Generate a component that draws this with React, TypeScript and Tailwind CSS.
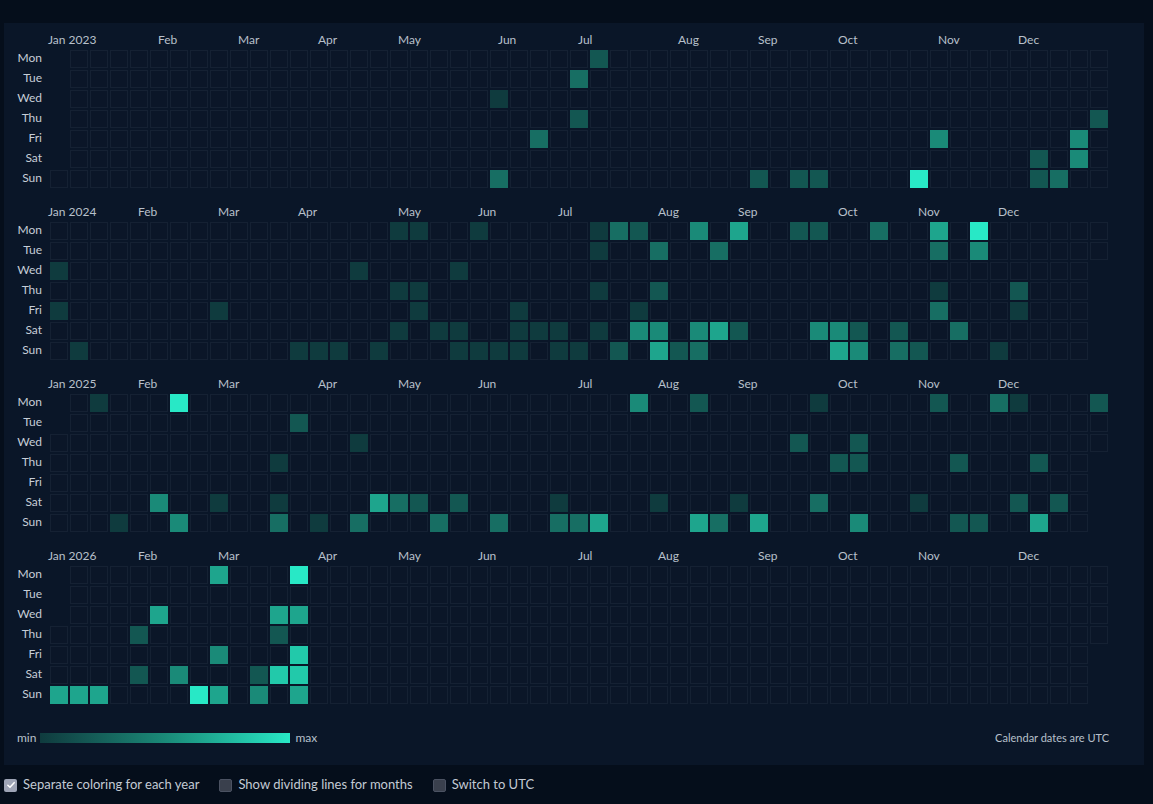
import React from 'react';

type Cell = [number, number];

// per year: rows Mon..Sun, each a list of [week column, level]
const activity: Record<number, Cell[][]> = {
  2023: [
    [[27, 2]],
    [[26, 3]],
    [[22, 1]],
    [[26, 2], [52, 2]],
    [[24, 3], [44, 4], [51, 4]],
    [[49, 2], [51, 4]],
    [[22, 3], [35, 2], [37, 2], [38, 2], [43, 7], [49, 2], [50, 3]],
  ],
  2024: [
    [[17, 1], [18, 1], [21, 1], [27, 1], [28, 3], [29, 2], [32, 4], [34, 5], [37, 2], [38, 2], [41, 3], [44, 5], [46, 7]],
    [[27, 1], [30, 3], [33, 3], [44, 3], [46, 4]],
    [[0, 1], [15, 1], [20, 1]],
    [[17, 1], [18, 1], [27, 1], [30, 2], [44, 1], [48, 2]],
    [[0, 1], [8, 1], [18, 1], [23, 1], [29, 1], [44, 3], [48, 1]],
    [[17, 1], [19, 1], [20, 1], [23, 1], [24, 1], [25, 1], [27, 1], [29, 4], [30, 4], [32, 4], [33, 5], [34, 2], [38, 4], [39, 4], [40, 2], [42, 2], [45, 3]],
    [[1, 1], [12, 1], [13, 1], [14, 1], [16, 1], [20, 1], [21, 1], [22, 1], [23, 1], [25, 1], [26, 1], [28, 2], [30, 5], [31, 2], [32, 3], [39, 5], [40, 4], [42, 3], [43, 2], [47, 1]],
  ],
  2025: [
    [[2, 1], [6, 7], [29, 4], [32, 2], [38, 1], [44, 2], [47, 3], [48, 1], [52, 2]],
    [[12, 2]],
    [[15, 1], [37, 2], [40, 2]],
    [[11, 1], [39, 2], [40, 2], [45, 2], [49, 2]],
    [],
    [[5, 4], [8, 1], [11, 1], [16, 5], [17, 3], [18, 2], [20, 2], [25, 1], [30, 1], [34, 1], [38, 3], [43, 1], [48, 2], [50, 2]],
    [[3, 1], [6, 4], [11, 3], [13, 1], [15, 3], [19, 3], [22, 3], [25, 3], [26, 3], [27, 5], [32, 5], [33, 3], [35, 5], [40, 4], [45, 2], [46, 2], [49, 5]],
  ],
  2026: [
    [[8, 5], [12, 7]],
    [],
    [[5, 5], [11, 5], [12, 5]],
    [[4, 2], [11, 2]],
    [[8, 4], [12, 6]],
    [[4, 2], [6, 4], [10, 2], [11, 6], [12, 6]],
    [[0, 5], [1, 5], [2, 5], [7, 7], [8, 5], [10, 4], [12, 5]],
  ],
};

const levelClass = [
  'bg-[#0b1628] border-[#152133]',
  'bg-[#0f3b3e] border-[#0f3b3e]',
  'bg-[#135752] border-[#135752]',
  'bg-[#176e63] border-[#176e63]',
  'bg-[#1a8a78] border-[#1a8a78]',
  'bg-[#1ea58d] border-[#1ea58d]',
  'bg-[#22c9aa] border-[#22c9aa]',
  'bg-[#28e8c6] border-[#28e8c6]',
];

const days = ['Mon', 'Tue', 'Wed', 'Thu', 'Fri', 'Sat', 'Sun'];
const months = ['Jan', 'Feb', 'Mar', 'Apr', 'May', 'Jun', 'Jul', 'Aug', 'Sep', 'Oct', 'Nov', 'Dec'];

const dayOfYear = (d: Date) => Math.round((d.getTime() - Date.UTC(d.getUTCFullYear(), 0, 1)) / 86400000);

const YearBlock = ({ year }: { year: number }) => {
  const offset = (new Date(Date.UTC(year, 0, 1)).getUTCDay() + 6) % 7;
  const length = dayOfYear(new Date(Date.UTC(year, 11, 31))) + 1;
  const levels: Record<string, number> = {};
  activity[year].forEach((row, r) => row.forEach(([c, l]) => (levels[`${c}-${r}`] = l)));

  const labels = months.map((name, m) => {
    if (m === 0) return { name: `Jan ${year}`, col: 0 };
    const prev = dayOfYear(new Date(Date.UTC(year, m, 0)));
    return { name, col: Math.floor((prev + offset) / 7) };
  });

  const cells = [];
  for (let c = 0; c < 53; c++) {
    for (let r = 0; r < 7; r++) {
      const doy = c * 7 + r - offset;
      if (doy < 0 || doy >= length) {
        cells.push(<div key={`${c}-${r}`} />);
      } else {
        const level = levels[`${c}-${r}`] ?? 0;
        cells.push(<div key={`${c}-${r}`} className={`border ${levelClass[level]}`} />);
      }
    }
  }

  return (
    <div className="flex flex-col">
      <div className="flex h-[18px]">
        <div className="w-[46px] shrink-0" />
        <div className="grid grid-cols-[repeat(53,18px)] gap-x-[2px] text-[12px] leading-[16px] text-[#b8c0cb]">
          {labels.map((l, i) => (
            <span
              key={l.name}
              className={`whitespace-nowrap ${i === 0 ? '-ml-0.5' : 'ml-2'}`}
              style={{ gridColumnStart: l.col + 1, gridRowStart: 1 }}
            >
              {l.name}
            </span>
          ))}
        </div>
      </div>
      <div className="flex">
        <div className="grid w-[38px] shrink-0 grid-rows-[repeat(7,18px)] gap-y-[2px] text-right text-[12px] leading-[16px] text-[#c6cdd7]">
          {days.map((d) => (
            <span key={d}>{d}</span>
          ))}
        </div>
        <div className="ml-[8px] grid grid-flow-col grid-cols-[repeat(53,18px)] grid-rows-[repeat(7,18px)] gap-[2px]">
          {cells}
        </div>
      </div>
    </div>
  );
};

const Checkbox = ({ checked, label }: { checked?: boolean; label: string }) => (
  <label className="flex items-center gap-[6px]">
    {checked ? (
      <span className="flex h-[13px] w-[13px] items-center justify-center rounded-[2px] bg-[#9ea4b6]">
        <svg viewBox="0 0 12 12" className="h-[10px] w-[10px]">
          <path d="M2.2 6.3 L4.8 8.8 L9.8 3.2" fill="none" stroke="#ffffff" strokeWidth="1.8" strokeLinecap="round" strokeLinejoin="round" />
        </svg>
      </span>
    ) : (
      <span className="h-[13px] w-[13px] rounded-[2px] border border-[#4b5262] bg-[#3a404d]" />
    )}
    <span>{label}</span>
  </label>
);

export default function App() {
  return (
    <div className="min-h-[804px] bg-[#050e1b] px-[4px] pt-[23px] font-['Lato','Liberation_Sans',sans-serif]">
      <div className="w-[1140px] bg-[#0a1628] pt-[9px] pb-[18px]">
        <div className="flex flex-col gap-4">
          {[2023, 2024, 2025, 2026].map((y) => (
            <YearBlock key={y} year={y} />
          ))}
        </div>
        <div className="mt-[26px] mb-px flex h-4 items-center pl-[13px] pr-[35px] text-[12px] text-[#b8c0cb]">
          <span>min</span>
          <div className="ml-[4px] h-[10px] w-[250px] bg-gradient-to-r from-[#0f3b3e] via-[#1a8a78] to-[#28e8c6]" />
          <span className="ml-[5px]">max</span>
          <span className="ml-auto text-[11px]">Calendar dates are UTC</span>
        </div>
      </div>
      <div className="flex h-[40px] items-center gap-5 text-[13px] text-[#c3cad4]">
        <Checkbox checked label="Separate coloring for each year" />
        <Checkbox label="Show dividing lines for months" />
        <Checkbox label="Switch to UTC" />
      </div>
    </div>
  );
}
